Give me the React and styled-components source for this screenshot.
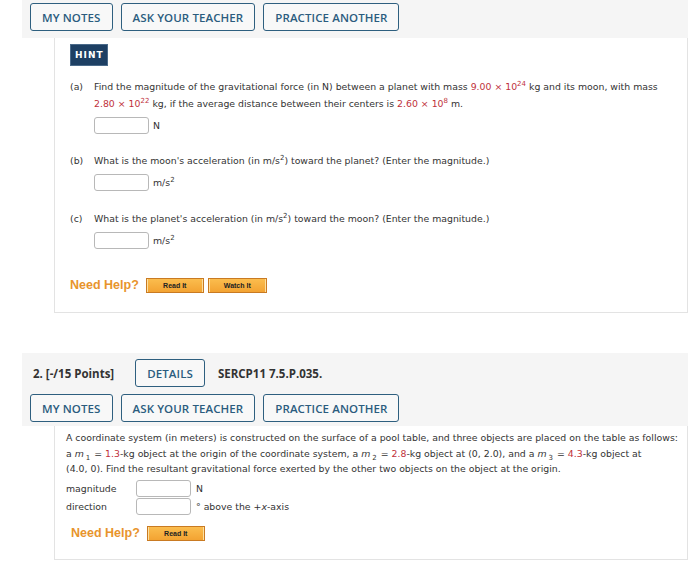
import React from "react";
import styled, { createGlobalStyle } from "styled-components";

const GlobalStyle = createGlobalStyle`
  body {
    margin: 0;
    background: #ffffff;
    font-family: "DejaVu Sans", Verdana, sans-serif;
    color: #333;
  }
`;

const Page = styled.div`
  width: 666px;
  margin-left: 22px;
`;

const Bar = styled.div`
  background: #f5f5f5;
  padding: ${(p) => (p.$header ? "6px 8px 4px 8px" : "3px 8px 7px 8px")};
  display: flex;
  flex-direction: column;
  gap: 7px;
`;

const Row = styled.div`
  display: flex;
  align-items: center;
  gap: 8px;
`;

const NavButton = styled.button`
  font-family: "Open Sans", sans-serif;
  font-weight: 600;
  font-size: 11.5px;
  color: #2b5c7e;
  background: #f8f8f8;
  border: 1.5px solid #2e5f7f;
  border-radius: 3px;
  height: 28px;
  padding: 0 11px;
  text-transform: uppercase;
  letter-spacing: 0.1px;
`;

const Points = styled.span`
  font-family: "Open Sans", sans-serif;
  font-weight: 700;
  font-size: 11.5px;
  color: #333;
  margin: 0 13px 0 3px;
`;

const Code = styled.span`
  font-family: "Open Sans", sans-serif;
  font-weight: 700;
  font-size: 11.5px;
  color: #333;
  margin-left: 5px;
`;

const Content = styled.div`
  margin-left: 32px;
  border: 1px solid #e3e3e3;
  border-top: none;
  padding: ${(p) => p.$pad};
  font-size: 9.35px;
  line-height: ${(p) => p.$lh || 17}px;
`;

const Hint = styled.div`
  display: inline-block;
  background: #1d3f63;
  color: #fff;
  font-family: "DejaVu Sans", sans-serif;
  font-weight: 700;
  font-size: 9px;
  line-height: 12px;
  letter-spacing: 1px;
  padding: 4px 3px 4px 4px;
  border: 1px solid #4a6a8a;
  margin-bottom: 12px;
`;

const Part = styled.div`
  display: grid;
  grid-template-columns: 24px 1fr;
  margin-bottom: ${(p) => p.$mb || 0}px;
`;

const Answer = styled.div`
  display: flex;
  align-items: center;
  gap: 4px;
  margin-top: 5px;
`;

const Input = styled.div`
  width: 53px;
  height: 15px;
  border: 1px solid #b8b8b8;
  border-radius: 3px;
  background: #fff;
`;

const Red = styled.span`
  color: #c0303a;
`;

const Sup = styled.sup`
  font-size: 7px;
  line-height: 0;
`;

const Var = styled.i`
  margin-right: 1px;
`;

const Sub = styled.sub`
  font-size: 7px;
  line-height: 0;
  vertical-align: -3px;
  margin: 0 1px;
`;

const NoWrap = styled.span`
  white-space: nowrap;
`;

const Help = styled.div`
  display: flex;
  align-items: center;
  gap: 4px;
  margin: ${(p) => p.$m || "0"};
`;

const HelpLabel = styled.span`
  font-family: "Liberation Sans", Arial, sans-serif;
  font-weight: 700;
  font-size: 12.5px;
  color: #e8942c;
  margin-right: 3px;
`;

const HelpButton = styled.span`
  display: inline-flex;
  align-items: center;
  justify-content: center;
  width: ${(p) => p.$w}px;
  height: 13px;
  background: linear-gradient(#fbbd4e, #f3a332);
  border: 1px solid #c97a22;
  box-shadow: inset 1px 0 0 #fde0a0, inset -1px 0 0 #fde0a0;
  font-family: "Liberation Sans", Arial, sans-serif;
  font-weight: 700;
  font-size: 7px;
  line-height: 13px;
  color: #222;
`;

const FieldRow = styled.div`
  display: grid;
  grid-template-columns: 66px 56px auto;
  align-items: center;
  column-gap: 4px;
  height: 18px;
  margin-top: ${(p) => p.$mt || 0}px;
`;

const Gap = styled.div`
  height: 40px;
`;

function Toolbar() {
  return (
    <Row>
      <NavButton>My Notes</NavButton>
      <NavButton>Ask Your Teacher</NavButton>
      <NavButton>Practice Another</NavButton>
    </Row>
  );
}

export default function App() {
  return (
    <Page>
      <GlobalStyle />
      <Bar>
        <Toolbar />
      </Bar>
      <Content $pad="6px 14px 18px 15px">
        <Hint>HINT</Hint>
        <Part $mb={18}>
          <span>(a)</span>
          <div>
            Find the magnitude of the gravitational force (in N) between a planet with mass{" "}
            <Red>
              9.00 × 10<Sup>24</Sup>
            </Red>{" "}
            kg and its moon, with mass{" "}
            <Red>
              2.80 × 10<Sup>22</Sup>
            </Red>{" "}
            kg, if the average distance between their centers is{" "}
            <Red>
              2.60 × 10<Sup>8</Sup>
            </Red>{" "}
            m.
            <Answer>
              <Input />
              <span>N</span>
            </Answer>
          </div>
        </Part>
        <Part $mb={19}>
          <span>(b)</span>
          <div>
            What is the moon's acceleration (in m/s<Sup>2</Sup>) toward the planet? (Enter the magnitude.)
            <Answer>
              <Input />
              <span>
                m/s<Sup>2</Sup>
              </span>
            </Answer>
          </div>
        </Part>
        <Part $mb={28}>
          <span>(c)</span>
          <div>
            What is the planet's acceleration (in m/s<Sup>2</Sup>) toward the moon? (Enter the magnitude.)
            <Answer>
              <Input />
              <span>
                m/s<Sup>2</Sup>
              </span>
            </Answer>
          </div>
        </Part>
        <Help>
          <HelpLabel>Need Help?</HelpLabel>
          <HelpButton $w={56}>Read It</HelpButton>
          <HelpButton $w={57}>Watch It</HelpButton>
        </Help>
      </Content>

      <Gap />

      <Bar $header>
        <Row>
          <Points>2. [-/15 Points]</Points>
          <NavButton>Details</NavButton>
          <Code>SERCP11 7.5.P.035.</Code>
        </Row>
        <Toolbar />
      </Bar>
      <Content $pad="4px 9px 18px 11px" $lh={15.5}>
        A coordinate system (in meters) is constructed on the surface of a pool table, and three objects are placed on the table as follows: a{" "}
        <Var>m</Var>
        <Sub>1</Sub> = <Red>1.3</Red>-kg object at the origin of the coordinate system, a <Var>m</Var>
        <Sub>2</Sub> = <Red>2.8</Red>-kg object at (0, 2.0), and a <Var>m</Var>
        <Sub>3</Sub> = <Red>4.3</Red>-kg object at <NoWrap>(4.0, 0).</NoWrap> Find the resultant gravitational force exerted by the other two objects on the object at the origin.
        <FieldRow $mt={3}>
          <span>magnitude</span>
          <Input />
          <span>N</span>
        </FieldRow>
        <FieldRow>
          <span>direction</span>
          <Input />
          <span>
            ° above the +<i>x</i>-axis
          </span>
        </FieldRow>
        <Help $m="10px 0 0 5px">
          <HelpLabel>Need Help?</HelpLabel>
          <HelpButton $w={56}>Read It</HelpButton>
        </Help>
      </Content>
    </Page>
  );
}
